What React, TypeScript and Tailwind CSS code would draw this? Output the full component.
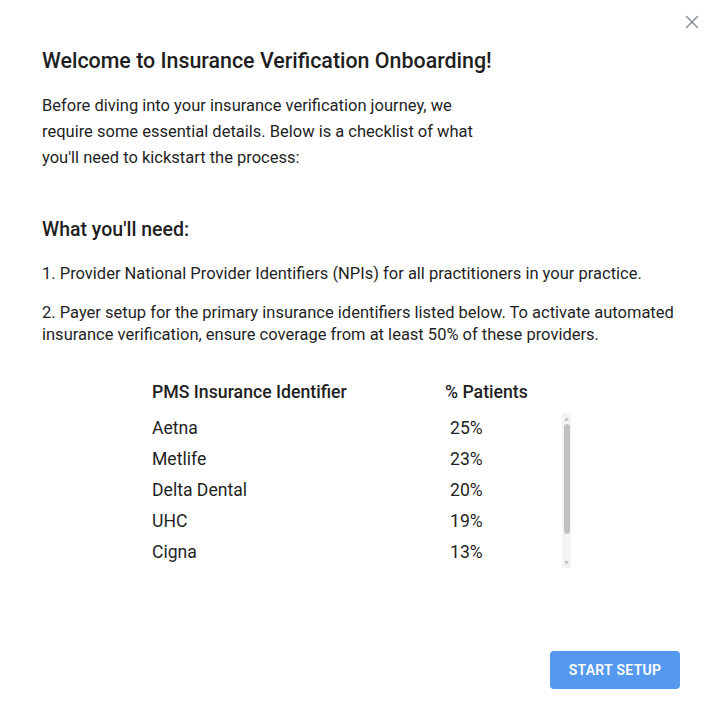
import { X } from "lucide-react"

const PAYERS = [
  { name: "Aetna", pct: "25%" },
  { name: "Metlife", pct: "23%" },
  { name: "Delta Dental", pct: "20%" },
  { name: "UHC", pct: "19%" },
  { name: "Cigna", pct: "13%" },
]

function FakeScrollbar() {
  return (
    <div className="w-[9px] h-[155px] bg-[#f4f4f4] flex flex-col items-center">
      <div className="h-[11px] flex items-center justify-center">
        <svg width="5" height="4" viewBox="0 0 5 4">
          <path d="M2.5 0 L5 4 L0 4 Z" fill="#c4c4c4" />
        </svg>
      </div>
      <div className="w-[6px] h-[110px] rounded-full bg-[#c1c1c1]" />
      <div className="flex-1" />
      <div className="h-[11px] flex items-center justify-center">
        <svg width="5" height="4" viewBox="0 0 5 4">
          <path d="M0 0 L5 0 L2.5 4 Z" fill="#c4c4c4" />
        </svg>
      </div>
    </div>
  )
}

export default function App() {
  return (
    <div
      className="relative w-[714px] h-[721px] bg-white text-[#1f1f1f] overflow-hidden"
      style={{ fontFamily: "Roboto, 'Noto Sans', sans-serif" }}
    >
      <button className="absolute right-[11px] top-[11px] text-[#8b939c]">
        <X size={22} strokeWidth={1.7} />
      </button>

      <div className="flex flex-col pl-[42px] pr-[36px] pt-[47px]">
        <h1 className="text-[21.4px] leading-[28px] font-medium">
          Welcome to Insurance Verification Onboarding!
        </h1>

        <p className="mt-[18px] max-w-[440px] text-[16.5px] leading-[26px]">
          Before diving into your insurance verification journey, we require some essential
          details. Below is a checklist of what you'll need to kickstart the process:
        </p>

        <h2 className="mt-[46px] text-[19.5px] leading-[26px] font-medium">What you'll need:</h2>

        <p className="mt-[20px] text-[16.5px] leading-[22px]">
          1. Provider National Provider Identifiers (NPIs) for all practitioners in your practice.
        </p>
        <p className="mt-[17px] text-[16.5px] leading-[22px]">
          2. Payer setup for the primary insurance identifiers listed below. To activate automated
          insurance verification, ensure coverage from at least 50% of these providers.
        </p>

        <div className="mt-[35px] ml-[110px] w-[419px] flex flex-col">
          <div className="flex text-[17.7px] leading-[22px] font-medium">
            <div className="w-[293px]">PMS Insurance Identifier</div>
            <div>% Patients</div>
          </div>
          <div className="mt-[10px] flex">
            <div className="flex flex-col w-[410px]">
              {PAYERS.map((p) => (
                <div key={p.name} className="flex h-[31px] items-center text-[17.6px]">
                  <div className="w-[298px]">{p.name}</div>
                  <div>{p.pct}</div>
                </div>
              ))}
            </div>
            <FakeScrollbar />
          </div>
        </div>
      </div>

      <div className="absolute right-[34px] bottom-[32px]">
        <button className="w-[130px] h-[38px] rounded-[4px] bg-[#5499ee] text-white text-[14px] font-semibold tracking-[0.3px]">
          START SETUP
        </button>
      </div>
    </div>
  )
}
